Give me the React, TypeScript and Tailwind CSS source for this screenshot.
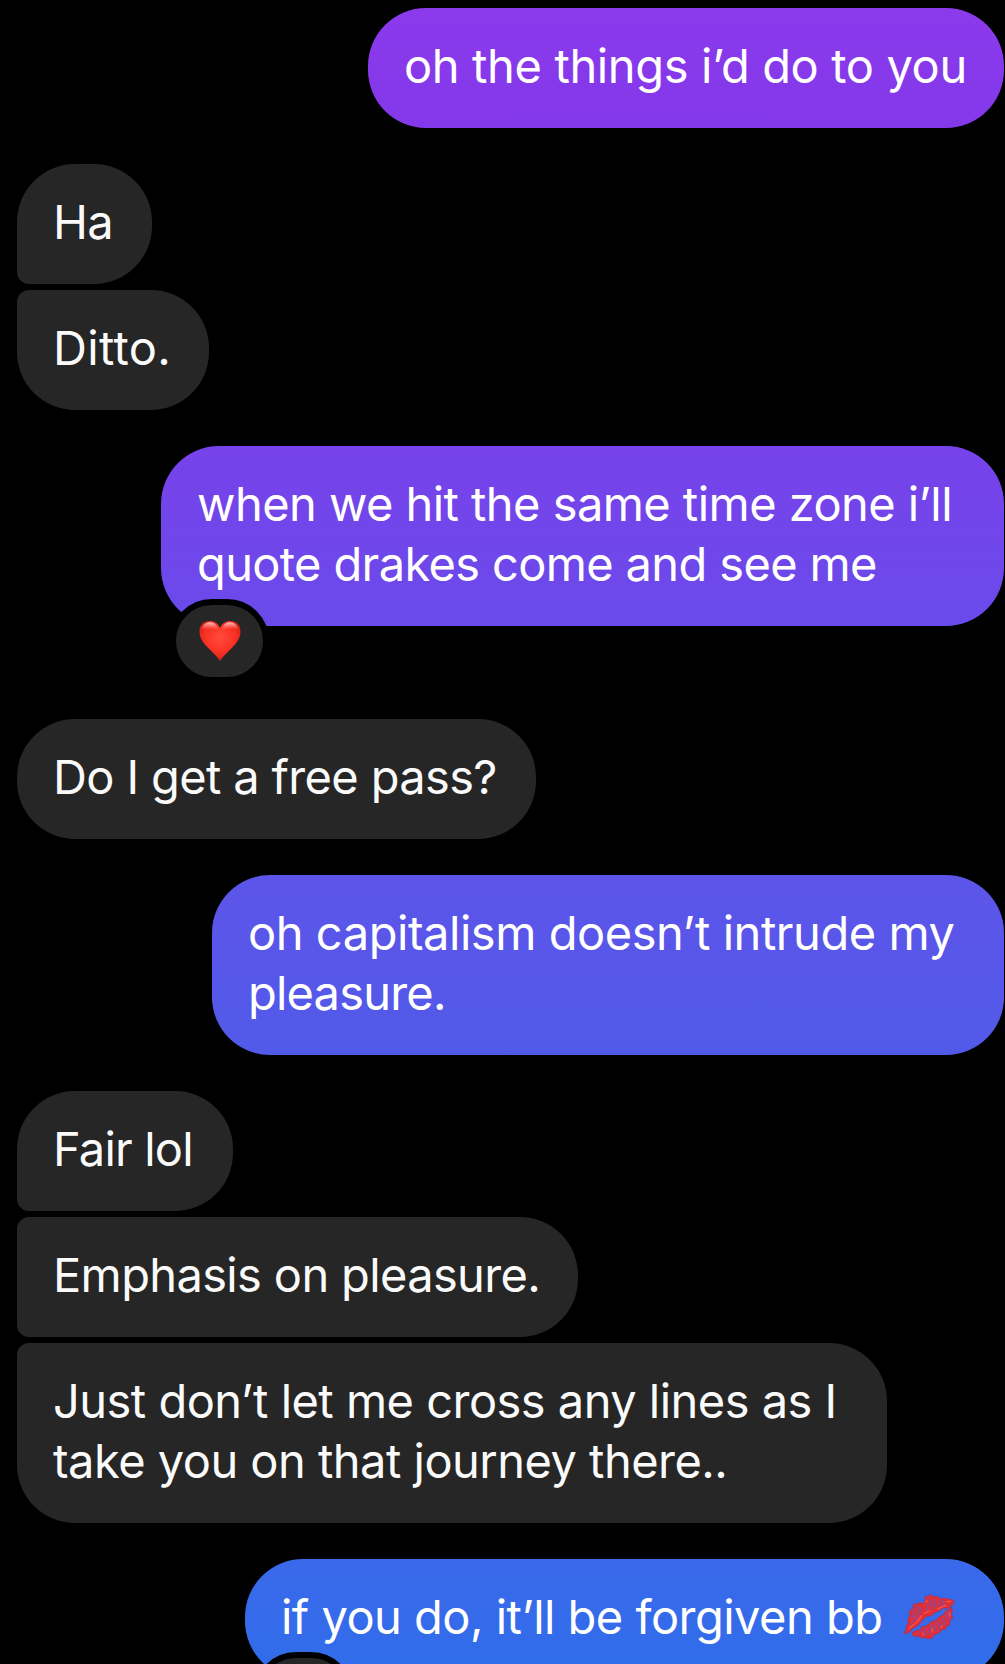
import clsx from 'clsx';
import type { ReactNode } from 'react';

type Line = { text: string; tracking: string; after?: ReactNode };

type Message = {
  id: number;
  lines: Line[];
  mine?: boolean;
  // width, gradient and corners of the bubble
  className: string;
  reaction?: boolean;
};

function Heart() {
  return (
    <svg width="42" height="42" viewBox="0 0 42 42">
      <defs>
        <radialGradient id="heartFill" cx="0.5" cy="0.42" r="0.62">
          <stop offset="0" stopColor="#ff4b3e" />
          <stop offset="0.55" stopColor="#fb3326" />
          <stop offset="1" stopColor="#d31c12" />
        </radialGradient>
        <linearGradient id="heartShine" x1="0" y1="0" x2="0" y2="1">
          <stop offset="0" stopColor="#ffe3df" stopOpacity="0.9" />
          <stop offset="1" stopColor="#ff6a5c" stopOpacity="0" />
        </linearGradient>
      </defs>
      <path
        d="M21 41C18.5 36.5 13.5 32.500 8.500 27.200C3.500 22 0.500 17.500 0.500 11.500C0.500 5 5 1 10.800 1C15.400 1 19.300 3.400 21 8C22.700 3.400 26.600 1 31.200 1C37 1 41.500 5 41.500 11.500C41.500 17.500 38.500 22 33.500 27.200C28.500 32.500 23.500 36.500 21 41Z"
        fill="url(#heartFill)"
      />
      <path d="M3 10.500C3 5 7 2.200 11 2.200C15.500 2.200 18.800 5.500 19 10.500C14 7.500 8 7.500 3 10.500Z" fill="url(#heartShine)" />
      <path d="M39 10.500C39 5 35 2.200 31 2.200C26.500 2.200 23.200 5.500 23 10.500C28 7.500 34 7.500 39 10.500Z" fill="url(#heartShine)" />
    </svg>
  );
}

function KissMark() {
  return (
    <svg width="52" height="45" viewBox="0 0 155 135" className="ml-[21px] inline-block align-[-5px]">
      <g fill="#df2f38" stroke="#b12c4b" strokeWidth="2" strokeLinejoin="round">
        <path d="M1 120L10 104L8 98L15 88L14 76L20 66L19 52L29 42L32 29L43 30L50 25L58 29L66 18L66 7L76 7L83 1L92 9L102 7L112 14L128 13L154 20L149 32L136 42L119 43L108 51L96 55L85 65L72 67L60 76L52 87L42 96L25 106L20 114Z" />
        <path d="M146 40L148 55L144 61L149 72L139 80L141 91L130 97L126 106L114 108L107 118L95 121L85 134L74 135L66 130L56 133L47 126L34 128L27 121L31 112L49 108L57 98L74 94L83 84L98 79L108 68L119 64L128 51Z" />
      </g>
      <g fill="none" stroke="#8150a6" strokeWidth="3.500" strokeLinecap="round" strokeLinejoin="round">
        <path d="M36 40L31 49L36 56L27 64L32 72M44 38L50 46L43 53M48 60L38 67L42 76L29 82M22 88L29 92L20 99M54 45L55 55" />
        <path d="M77 17L84 23L78 31L87 36M72 31L75 42L68 48M93 20L91 31L99 34L92 43M104 20L112 26L106 34M119 20L124 28L117 34" />
        <path d="M137 51L133 60L137 68M127 64L129 74L135 77M118 73L116 82L125 86L121 94M106 82L103 92L111 95L108 105" />
        <path d="M94 88L91 98L98 103L94 112M81 95L82 106L76 111L83 120M68 101L64 111L70 118L67 124M53 108L51 118" />
      </g>
      <g fill="none" stroke="#ff5148" strokeWidth="4" strokeLinecap="round">
        <path d="M18 103L38 87M42 84L55 65M63 58L80 51M103 45L127 34M130 23L143 22M67 24L72 21M60 119L60 123M87 103L88 113M115 96L116 100M139 56L140 66" />
      </g>
    </svg>
  );
}

function Reaction({ children }: { children?: ReactNode }) {
  return (
    <div className="absolute -bottom-[57px] left-[9px] flex h-21 w-[99px] items-center justify-center rounded-[42px] border-6 border-black bg-[#262626]">
      {children}
    </div>
  );
}

// Messages from the same sender, back to back
const groups: Message[][] = [
  [
    {
      id: 1,
      mine: true,
      className: 'w-[636px] from-[#8b3aec] to-[#8338e9] rounded-[58px]',
      lines: [{ text: 'oh the things i’d do to you', tracking: 'tracking-[-0.37px]' }],
    },
  ],
  [
    {
      id: 2,
      className: 'w-[135px] rounded-[58px] rounded-bl-xl',
      lines: [{ text: 'Ha', tracking: 'tracking-[-0.6px]' }],
    },
    {
      id: 3,
      className: 'w-48 rounded-[58px] rounded-tl-xl',
      lines: [{ text: 'Ditto.', tracking: 'tracking-[0.33px]' }],
    },
  ],
  [
    {
      id: 4,
      mine: true,
      reaction: true,
      className: 'w-[843px] from-[#7742ea] to-[#6a4aea] rounded-[58px]',
      lines: [
        { text: 'when we hit the same time zone i’ll', tracking: 'tracking-[-0.55px]' },
        { text: 'quote drakes come and see me', tracking: 'tracking-[-0.64px]' },
      ],
    },
  ],
  [
    {
      id: 5,
      className: 'w-[519px] rounded-[58px]',
      lines: [{ text: 'Do I get a free pass?', tracking: 'tracking-[-0.64px]' }],
    },
  ],
  [
    {
      id: 6,
      mine: true,
      className: 'w-[792px] from-[#5d54ea] to-[#515ae8] rounded-[58px]',
      lines: [
        { text: 'oh capitalism doesn’t intrude my', tracking: 'tracking-[-0.45px]' },
        { text: 'pleasure.', tracking: 'tracking-[-0.8px]' },
      ],
    },
  ],
  [
    {
      id: 7,
      className: 'w-54 rounded-[58px] rounded-bl-xl',
      lines: [{ text: 'Fair lol', tracking: 'tracking-[-0.8px]' }],
    },
    {
      id: 8,
      className: 'w-[561px] rounded-[58px] rounded-l-xl',
      lines: [{ text: 'Emphasis on pleasure.', tracking: 'tracking-[-0.64px]' }],
    },
    {
      id: 9,
      className: 'w-[870px] rounded-[58px] rounded-tl-xl',
      lines: [
        { text: 'Just don’t let me cross any lines as I', tracking: 'tracking-[-0.52px]' },
        { text: 'take you on that journey there..', tracking: 'tracking-[-0.52px]' },
      ],
    },
  ],
  [
    {
      id: 10,
      mine: true,
      reaction: true,
      className: 'w-[759px] from-[#3a69ea] to-[#2f6dea] rounded-[58px]',
      lines: [
        { text: 'if you do, it’ll be forgiven bb', tracking: 'tracking-[-0.52px]', after: <KissMark /> },
      ],
    },
  ],
];

function Bubble({ message }: { message: Message }) {
  return (
    <div
      className={clsx(
        'relative shrink-0 px-9 pt-7 pb-8 whitespace-nowrap',
        message.mine ? 'bg-linear-to-b text-white' : 'bg-[#262626] text-[#fafafa]',
        message.className,
      )}
    >
      {message.lines.map((line) => (
        <p key={line.text} className={clsx('h-15', line.tracking)}>
          {line.text}
          {line.after}
        </p>
      ))}
      {message.reaction && (
        <Reaction>
          <Heart />
        </Reaction>
      )}
    </div>
  );
}

export default function App() {
  return (
    <main className="flex h-[1664px] w-[1005px] flex-col gap-9 overflow-hidden bg-black pt-2 pr-px pl-[17px] font-['Inter','Liberation_Sans',sans-serif] text-[47px] leading-[60px]">
      {groups.map((group) => (
        <section
          key={group[0].id}
          className={clsx(
            'flex shrink-0 flex-col gap-1.5',
            group[0].mine ? 'items-end' : 'items-start',
            // leaves room for the reaction hanging below the bubble
            group[0].reaction && 'pb-[57px]',
          )}
        >
          {group.map((message) => (
            <Bubble key={message.id} message={message} />
          ))}
        </section>
      ))}
    </main>
  );
}
